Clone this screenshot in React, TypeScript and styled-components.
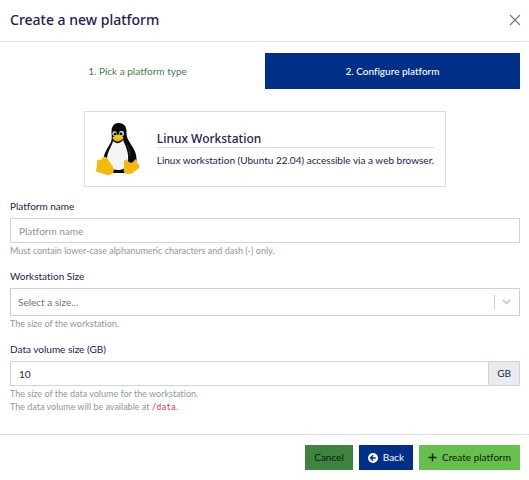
import React from "react";
import styled, { createGlobalStyle } from "styled-components";

const GlobalStyle = createGlobalStyle`
  *, *::before, *::after { box-sizing: border-box; }
  body {
    margin: 0;
    background: #fff;
    color: #212150;
    font-family: Lato, "Noto Sans", sans-serif;
    font-size: 10px;
    line-height: 15px;
    font-variant-ligatures: none;
  }
  button, input, select {
    font: inherit;
    font-variant-ligatures: none;
    border-radius: 0;
    margin: 0;
  }
`;

const Dialog = styled.form`
  display: flex;
  flex-direction: column;
`;

const Header = styled.header`
  display: flex;
  align-items: center;
  justify-content: space-between;
  padding: 9px 8px 11px 10px;
  border-bottom: 1px solid #dee0e2;
`;

const Title = styled.h1`
  margin: 0;
  font-family: "Noto Sans", sans-serif;
  font-size: 14px;
  line-height: 21px;
  font-weight: 500;
`;

const CloseButton = styled.button`
  display: flex;
  padding: 0;
  border: 0;
  background: none;
  color: #77797b;
`;

const Body = styled.div`
  display: flex;
  flex-direction: column;
  padding: 11px 9px 21px 10px;
`;

const Steps = styled.nav`
  display: grid;
  grid-template-columns: 1fr 1fr;
`;

const Step = styled.button<{ $active?: boolean }>`
  height: 36px;
  padding: 0;
  border: 0;
  background: ${(p) => (p.$active ? "#002f87" : "transparent")};
  color: ${(p) => (p.$active ? "#fff" : "#4c7a50")};
  font-weight: ${(p) => (p.$active ? 500 : 400)};
`;

const TypeCard = styled.section`
  display: flex;
  align-items: center;
  align-self: center;
  gap: 12px;
  height: 76px;
  margin: 22px 0 12px;
  padding: 0 11px;
  border: 1px solid #dcdfe1;
`;

const CardTitle = styled.h2`
  margin: 0 0 5px;
  border-bottom: 1px solid #d9dbdf;
  font-family: "Noto Sans", sans-serif;
  font-size: 12px;
  line-height: 16px;
  font-weight: 500;
`;

const CardText = styled.p`
  margin: 0;
`;

const Field = styled.div`
  display: flex;
  flex-direction: column;
  margin-bottom: 12px;
  &:last-child { margin-bottom: 0; }
`;

const Label = styled.label`
  margin-bottom: 4px;
`;

const TextInput = styled.input`
  flex: 1;
  min-width: 0;
  height: 25px;
  padding: 0 8px;
  border: 1px solid #ced4da;
  background: #fff;
  color: #212150;
  &::placeholder { color: #8d9598; opacity: 1; }
`;

const InputRow = styled.div`
  display: flex;
`;

const Unit = styled.span`
  display: flex;
  align-items: center;
  padding: 0 8px;
  border: 1px solid #ced4da;
  border-left: 0;
  background: #e9ecef;
`;

const SelectWrap = styled.div`
  position: relative;
  display: flex;
`;

const Select = styled.select`
  flex: 1;
  height: 28px;
  padding: 0 32px 0 7px;
  border: 1px solid #cccfd4;
  appearance: none;
  background: #fff;
  color: #70757a;
`;

const Indicator = styled.span`
  position: absolute;
  top: 7px;
  right: 9px;
  display: flex;
  align-items: center;
  height: 14px;
  padding-left: 7px;
  border-left: 1px solid #ccc;
  color: #c8c8c8;
  pointer-events: none;
`;

const Hint = styled.p`
  margin: 1px 0 0;
  font-size: 9px;
  line-height: 13px;
  color: #8d989c;
`;

const Code = styled.code`
  color: #d63a6c;
  font-family: "DejaVu Sans Mono", monospace;
  font-size: 8px;
  line-height: 1;
`;

const Footer = styled.footer`
  display: flex;
  justify-content: flex-end;
  gap: 6px;
  padding: 10px 9px;
  border-top: 1px solid #dee0e2;
`;

const Action = styled.button<{ $bg: string; $fg: string }>`
  display: flex;
  align-items: center;
  gap: 5px;
  height: 25px;
  padding: 0 9px;
  border: 0;
  background: ${(p) => p.$bg};
  color: ${(p) => p.$fg};
`;

const Tux = () => (
  <svg width="49" height="56" viewBox="0 0 49 56" role="img" aria-label="Linux penguin">
    <path d="M22.500 2c-5 0-7 4-7 9 0 4 1 7-1 11-3 5-7 11-7 17 0 6 5 12 11 13h13c5-2 9-7 9-14 0-7-4-12-7-17-3-5-3-7-3-11 0-5-3-8-8-8z" fill="#090909" />
    <path d="M17 20c-1 5-6 11-6 18 0 8 5 11 11 11 5 0 9-2 10-9 1-8-2-14-5-21-3 4-7 4-10 1z" fill="#f4f4f6" />
    <path d="M31 24c2 3 3 6 3 11" fill="none" stroke="#3b3b3b" strokeWidth="1" />
    <ellipse cx="18.500" cy="12.500" rx="2.200" ry="2.600" fill="#ccc" />
    <ellipse cx="25.500" cy="12.500" rx="2.500" ry="2.800" fill="#ccc" />
    <circle cx="19" cy="13" r="1.300" fill="#111" />
    <circle cx="25" cy="13" r="1.400" fill="#111" />
    <path d="M16.500 16.500c2-1 3-3 5-3s5 1 6 3c0 2-4 4-6 4s-5-2-5-4z" fill="#f5c518" />
    <path d="M17 17.500c3 2 7 2 10 0" fill="none" stroke="#b98208" strokeWidth=".6" />
    <path d="M2 39c3 0 4-1 6-3 2-1 3 1 5 4l4 6c2 4 0 8-5 8-4 0-7-3-11-3-2-1 0-4 0-7 0-2-1-4 1-5z" fill="#f3b90b" />
    <path d="M28 41c1-3 3-3 4-1 2 3 6 2 7-2 2 1 1 3 3 5 2 2 2 3 0 5-4 2-5 5-9 5-5 0-6-3-5-6 0-2 0-4 0-6z" fill="#f3b90b" />
  </svg>
);

export default function App() {
  return (
    <>
      <GlobalStyle />
      <Dialog onSubmit={(e) => e.preventDefault()}>
        <Header>
          <Title>Create a new platform</Title>
          <CloseButton type="button" aria-label="Close">
            <svg width="12" height="12" viewBox="0 0 12 12" stroke="currentColor" strokeWidth="1.200">
              <path d="M1 1l10 10M11 1L1 11" />
            </svg>
          </CloseButton>
        </Header>
        <Body>
          <Steps>
            <Step type="button">1. Pick a platform type</Step>
            <Step type="button" $active aria-current="step">2. Configure platform</Step>
          </Steps>
          <TypeCard>
            <Tux />
            <div>
              <CardTitle>Linux Workstation</CardTitle>
              <CardText>Linux workstation (Ubuntu 22.04) accessible via a web browser.</CardText>
            </div>
          </TypeCard>
          <Field>
            <Label htmlFor="name">Platform name</Label>
            <InputRow>
              <TextInput id="name" placeholder="Platform name" />
            </InputRow>
            <Hint>Must contain lower-case alphanumeric characters and dash (-) only.</Hint>
          </Field>
          <Field>
            <Label htmlFor="size">Workstation Size</Label>
            <SelectWrap>
              <Select id="size" defaultValue="">
                <option value="">Select a size...</option>
              </Select>
              <Indicator>
                <svg width="9" height="6" viewBox="0 0 9 6" fill="none" stroke="currentColor" strokeWidth="1.600" strokeLinecap="round">
                  <path d="M1 1l3.500 3.500L8 1" />
                </svg>
              </Indicator>
            </SelectWrap>
            <Hint>The size of the workstation.</Hint>
          </Field>
          <Field>
            <Label htmlFor="volume">Data volume size (GB)</Label>
            <InputRow>
              <TextInput id="volume" defaultValue="10" inputMode="numeric" />
              <Unit>GB</Unit>
            </InputRow>
            <Hint>
              The size of the data volume for the workstation.
              <br />
              The data volume will be available at <Code>/data</Code>.
            </Hint>
          </Field>
        </Body>
        <Footer>
          <Action type="button" $bg="#3e833f" $fg="#071a0b">Cancel</Action>
          <Action type="button" $bg="#002f87" $fg="#fff">
            <svg width="10" height="10" viewBox="0 0 10 10">
              <circle cx="5" cy="5" r="5" fill="#fff" />
              <path d="M5.200 2.300L2.500 5l2.700 2.700M2.700 5h5" fill="none" stroke="#002f87" strokeWidth="1.300" />
            </svg>
            Back
          </Action>
          <Action type="submit" $bg="#67c04d" $fg="#0b1c0b">
            <svg width="9" height="9" viewBox="0 0 9 9" stroke="currentColor" strokeWidth="1.400">
              <path d="M4.500 0.500v8M0.500 4.500h8" />
            </svg>
            Create platform
          </Action>
        </Footer>
      </Dialog>
    </>
  );
}
